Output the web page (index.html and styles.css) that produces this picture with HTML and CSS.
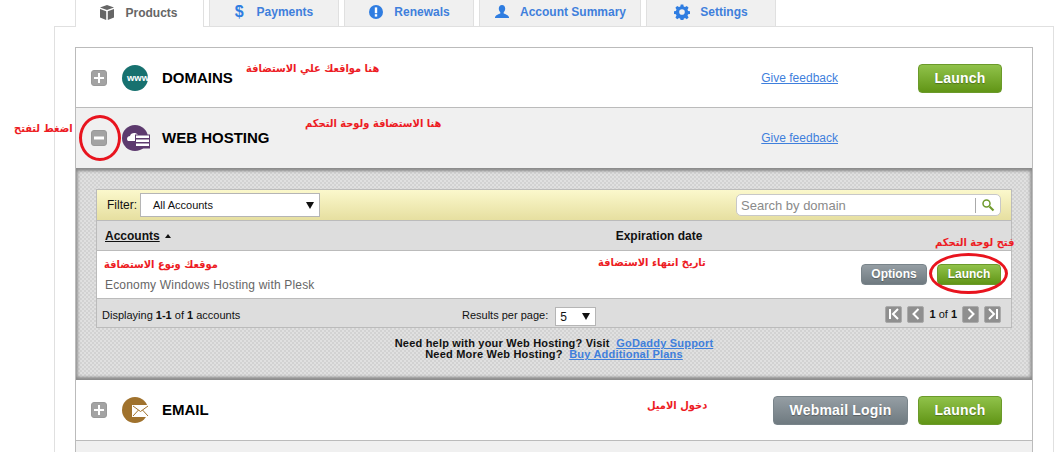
FILE: index.html
```html
<!DOCTYPE html>
<html lang="en">
<head>
    <meta charset="UTF-8">
    <title>My Products</title>
    <link rel="stylesheet" href="styles.css">
</head>
<body>
    <ul class="tabs">
        <li class="tab tab-active tab-products">
            <svg class="tab-icon" width="16" height="16" viewBox="0 0 16 16"><path fill="#666" d="M8 0l7 2.4L8 5 1 2.4zM1 4l6.2 2.3V15L1 12.6zM15 4L8.8 6.3V15l6.2-2.4z"/></svg>
            Products
        </li>
        <li class="tab tab-payments"><span class="dollar">$</span>Payments</li>
        <li class="tab tab-renewals">
            <svg class="tab-icon" width="16" height="16" viewBox="0 0 16 16"><circle cx="8" cy="8" r="7" fill="#2f7de1"/><rect x="6.8" y="3.4" width="2.4" height="5.8" fill="#fff"/><rect x="6.8" y="10.2" width="2.4" height="2.4" fill="#fff"/></svg>
            Renewals
        </li>
        <li class="tab tab-account">
            <svg class="tab-icon" width="16" height="16" viewBox="0 0 16 16"><path fill="#2f7de1" d="M8 1c2 0 3.2 1.500 3.200 3.600 0 1.600-.7 2.900-1.500 3.600v1.300c1.900.7 4 1.300 5.300 3.500v1H1v-1c1.300-2.200 3.400-2.800 5.300-3.500V8.200C5.500 7.500 4.800 6.200 4.800 4.600 4.800 2.500 6 1 8 1z"/></svg>
            Account Summary
        </li>
        <li class="tab tab-settings">
            <svg class="tab-icon" width="16" height="16" viewBox="0 0 16 16"><path fill="#2f7de1" fill-rule="evenodd" d="M6.700 1h2.600l.4 2 1.300.6 1.800-1.100 1.800 1.800-1.100 1.800.6 1.300 2 .4v2.600l-2 .4-.6 1.300 1.100 1.800-1.800 1.800-1.800-1.100-1.300.6-.4 2H6.700l-.4-2-1.300-.6-1.800 1.100-1.800-1.800 1.100-1.800-.6-1.300-2-.4V7.800l2-.4.6-1.300-1.100-1.800 1.800-1.800L5 3.600l1.300-.6zM8 5.700a2.800 2.800 0 1 0 0 5.600 2.800 2.800 0 0 0 0-5.600z" transform="translate(0 -.5)"/></svg>
            Settings
        </li>
    </ul>

    <div class="frame">
        <div class="panel">
            <div class="row row-domains">
                <span class="toggle">
                    <svg width="12" height="12" viewBox="0 0 12 12"><path fill="#fff" d="M5 1h2v4h4v2H7v4H5V7H1V5h4z"/></svg>
                </span>
                <svg class="row-icon" width="30" height="26" viewBox="0 0 30 26">
                    <circle cx="13" cy="13" r="13" fill="#17716f"/>
                    <text x="16" y="16" class="www">www</text>
                </svg>
                <h2 class="row-title">DOMAINS</h2>
                <a class="feedback" href="#">Give feedback</a>
                <a class="btn btn-green" href="#">Launch</a>
            </div>

            <div class="row row-open">
                <span class="toggle">
                    <svg width="12" height="12" viewBox="0 0 12 12"><rect x="1" y="4.500" width="10" height="3" fill="#fff"/></svg>
                </span>
                <svg class="row-icon" width="30" height="26" viewBox="0 0 30 26">
                    <circle cx="13" cy="13" r="13" fill="#5d3a6e"/>
                    <path fill="#fff" d="M6 16c-2-2-.5-5 2-5 .5-3 5.500-4.500 8-1v3h-3v3z"/>
                    <rect x="13" y="9.500" width="15" height="14" fill="#5d3a6e"/>
                    <path fill="#fff" d="M14 10.500h13v2.500H14zM14 14.500h13V17H14zM14 18.500h13V21H14z"/>
                </svg>
                <h2 class="row-title">WEB HOSTING</h2>
                <a class="feedback" href="#">Give feedback</a>
            </div>

            <div class="details">
                <div class="card">
                    <div class="toolbar">
                        <span class="filter-label">Filter:</span>
                        <div class="select select-filter">All Accounts<span class="arrow"></span></div>
                        <div class="search">
                            <span class="search-text">Search by domain</span>
                            <svg width="14" height="14" viewBox="0 0 14 14"><circle cx="5.500" cy="5.500" r="3.500" fill="#fff" stroke="#6f9a2c" stroke-width="1.500"/><path d="M8.500 8.500l4 4" stroke="#6f9a2c" stroke-width="2.200"/></svg>
                        </div>
                    </div>
                    <div class="table-head">
                        <a class="col-accounts" href="#">Accounts</a><span class="sort-up"></span>
                        <span class="col-expires">Expiration date</span>
                    </div>
                    <div class="table-row">
                        <span class="plan-name">Economy Windows Hosting with Plesk</span>
                        <a class="btn btn-gray btn-small btn-options" href="#">Options</a>
                        <a class="btn btn-green btn-small" href="#">Launch</a>
                    </div>
                    <div class="table-foot">
                        <span class="displaying">Displaying <b>1-1</b> of <b>1</b> accounts</span>
                        <span class="per-page">Results per page:</span>
                        <div class="select select-page">5<span class="arrow"></span></div>
                        <div class="pager">
                            <span class="page-btn"><svg width="12" height="12" viewBox="0 0 12 12"><path fill="none" stroke="#fff" stroke-width="2" d="M2 1v10M10 1L5 6l5 5"/></svg></span>
                            <span class="page-btn"><svg width="12" height="12" viewBox="0 0 12 12"><path fill="none" stroke="#fff" stroke-width="2" d="M8.500 1l-5 5 5 5"/></svg></span>
                            <span class="page-count"><b>1</b> of <b>1</b></span>
                            <span class="page-btn"><svg width="12" height="12" viewBox="0 0 12 12"><path fill="none" stroke="#fff" stroke-width="2" d="M3.500 1l5 5-5 5"/></svg></span>
                            <span class="page-btn"><svg width="12" height="12" viewBox="0 0 12 12"><path fill="none" stroke="#fff" stroke-width="2" d="M10 1v10M2 1l5 5-5 5"/></svg></span>
                        </div>
                    </div>
                </div>
                <p class="help">
                    Need help with your Web Hosting? Visit &nbsp;<a href="#">GoDaddy Support</a><br>
                    Need More Web Hosting? &nbsp;<a href="#">Buy Additional Plans</a>
                </p>
            </div>

            <div class="row row-email">
                <span class="toggle">
                    <svg width="12" height="12" viewBox="0 0 12 12"><path fill="#fff" d="M5 1h2v4h4v2H7v4H5V7H1V5h4z"/></svg>
                </span>
                <svg class="row-icon" width="30" height="26" viewBox="0 0 30 26">
                    <circle cx="13" cy="13" r="13" fill="#a0722d"/>
                    <rect x="10" y="8" width="17" height="12" fill="#fff"/>
                    <path fill="none" stroke="#a0722d" d="M11 9l7.500 5.500L26 9M11 19l5.500-6M26 19l-5.500-6"/>
                </svg>
                <h2 class="row-title">EMAIL</h2>
                <a class="btn btn-gray btn-webmail" href="#">Webmail Login</a>
                <a class="btn btn-green" href="#">Launch</a>
            </div>
            <div class="row-next"></div>
        </div>
    </div>

    <span class="note note-domains" dir="rtl">هنا مواقعك علي الاستضافة</span>
    <span class="note note-hosting" dir="rtl">هنا الاستضافة ولوحة التحكم</span>
    <span class="note note-press" dir="rtl">اضغط لتفتح</span>
    <span class="note note-site" dir="rtl">موقعك ونوع الاستضافة</span>
    <span class="note note-expiry" dir="rtl">تاريخ انتهاء الاستضافة</span>
    <span class="note note-open" dir="rtl">فتح لوحة التحكم</span>
    <span class="note note-mail" dir="rtl">دخول الاميل</span>
    <span class="oval oval-toggle"></span>
    <span class="oval oval-launch"></span>
</body>
</html>
```

FILE: styles.css
```css
html, body {
    height: 452px;
    overflow: hidden;
}

body {
    margin: 0;
    position: relative;
    background: #fff;
    font-family: "Liberation Sans", Arial, sans-serif;
    font-size: 12px;
    color: #111;
}

a {
    color: #3f7fdc;
}

/* tabs */
.tabs {
    display: flex;
    gap: 5px;
    height: 26px;
    margin: 0;
    padding: 0 0 0 75px;
    list-style: none;
}

.tab {
    display: flex;
    align-items: center;
    justify-content: center;
    box-sizing: border-box;
    height: 26px;
    background: #f0f0f0;
    border: 1px solid #e0e0e0;
    border-width: 0 1px;
    color: #3f7fdc;
    font-weight: bold;
    padding-bottom: 2px;
}

.tab-active {
    height: 27px;
    background: #fff;
    color: #666;
    position: relative;
    z-index: 1;
}

.tab-products { width: 129px; padding-right: 2px; }
.tab-payments { width: 130px; }
.tab-renewals { width: 130px; }
.tab-account { width: 162px; }
.tab-settings { width: 130px; }

.tab-icon {
    margin-right: 10px;
}

.dollar {
    font-size: 16px;
    margin-right: 13px;
    color: #2f7de1;
}

/* page frame */
.frame {
    box-sizing: border-box;
    width: 1000px;
    height: 426px;
    margin-left: 54px;
    padding: 20px 20px 0;
    border: 1px solid #e0e0e0;
    border-bottom: none;
}

.panel {
    border: 1px solid #bbb;
    border-bottom: none;
}

.row {
    display: flex;
    align-items: center;
    box-sizing: border-box;
    height: 60px;
    padding: 0 30px 0 15px;
    border-bottom: 1px solid #bbb;
}

.row-domains {
    padding-top: 1px;
}

.row-email {
    height: 61px;
}

.row-open {
    background: #f0f0f0;
    border-bottom: none;
}

.row-next {
    height: 20px;
    background: #f0f0f0;
}

.toggle {
    display: flex;
    align-items: center;
    justify-content: center;
    width: 16px;
    height: 16px;
    background: #a3a3a3;
    border: 1px solid #999;
    box-sizing: border-box;
    border-radius: 3px;
}

.row-icon {
    margin-left: 15px;
}

.www {
    fill: #fff;
    font-size: 9.500px;
    font-weight: bold;
    text-anchor: middle;
}

.row-title {
    flex: 1;
    margin: 0 0 0 10px;
    font-size: 15px;
    line-height: 18px;
    color: #000;
}

.feedback {
    margin-right: 80px;
}

.row-open .feedback {
    margin-right: 164px;
}

/* buttons */
.btn {
    display: block;
    box-sizing: border-box;
    width: 84px;
    height: 29px;
    border-radius: 4px;
    color: #fff;
    font-size: 14px;
    font-weight: bold;
    letter-spacing: 0.2px;
    line-height: 27px;
    text-align: center;
    text-decoration: none;
    text-shadow: 0 1px 1px rgba(0,0,0,0.3);
}

.btn-green {
    background: linear-gradient(#90c24a, #619516);
    border: 1px solid #6b9a2a;
}

.btn-gray {
    background: linear-gradient(#959ea4, #6f7a80);
    border: 1px solid #79848a;
}

.btn-webmail {
    width: 135px;
    margin-right: 10px;
}

.btn-small {
    width: 64px;
    height: 21px;
    font-size: 12px;
    letter-spacing: 0;
    line-height: 18px;
}

.btn-options {
    width: 66px;
    margin-right: 10px;
    margin-left: auto;
}

/* expanded details */
.details {
    box-sizing: border-box;
    height: 212px;
    padding: 21px 20px 0;
    background-color: #e0e0e0;
    background-image: conic-gradient(#d2d2d2 25%, transparent 0 50%, #d2d2d2 0 75%, transparent 0);
    background-size: 4px 4px;
    box-shadow: inset 0 4px 3px -1px #8a8a8a, inset 0 -4px 3px -1px #8a8a8a, inset 4px 0 3px -2px #a0a0a0, inset -4px 0 3px -2px #a0a0a0;
}

.card {
    border: 1px solid #bbb;
    background: #ddd;
}

.toolbar {
    display: flex;
    align-items: center;
    box-sizing: border-box;
    height: 31px;
    padding: 0 10px;
    background: linear-gradient(#fbf8cc, #e6dfa0);
    border-bottom: 1px solid #bbb;
}

.filter-label {
    margin-right: 3px;
}

.select {
    position: relative;
    box-sizing: border-box;
    background: #fff;
    border: 1px solid #b5b5b5;
    font-size: 11px;
}

.select-filter {
    width: 180px;
    height: 24px;
    padding-left: 12px;
    line-height: 22px;
}

.select-page {
    width: 41px;
    height: 19px;
    margin-top: 4px;
    margin-left: 7px;
    padding-left: 4px;
    font-size: 12px;
    line-height: 18px;
}

.arrow {
    position: absolute;
    right: 5px;
    top: 50%;
    margin-top: -3px;
    border: 4px solid transparent;
    border-top: 7px solid #111;
    border-bottom: none;
}

.search {
    display: flex;
    align-items: center;
    box-sizing: border-box;
    width: 265px;
    height: 22px;
    margin-left: auto;
    padding: 0 5px 0 4px;
    background: #fff;
    border: 1px solid #c8c8c8;
    border-radius: 5px;
}

.search-text {
    flex: 1;
    margin-right: 5px;
    border-right: 1px solid #aaa;
    color: #8a8a8a;
    font-size: 13px;
    line-height: 15px;
}

.table-head {
    display: flex;
    align-items: center;
    box-sizing: border-box;
    height: 30px;
    padding-left: 8px;
    border-bottom: 1px solid #bbb;
    font-weight: bold;
}

.col-accounts {
    color: #111;
}

.sort-up {
    margin-left: 5px;
    border: 3px solid transparent;
    border-top: none;
    border-bottom: 4px solid #111;
}

.col-expires {
    margin-left: 445px;
}

.table-row {
    display: flex;
    align-items: center;
    box-sizing: border-box;
    height: 48px;
    padding-right: 10px;
    padding-left: 8px;
    background: #fff;
    border-bottom: 1px solid #bbb;
}

.plan-name {
    align-self: flex-end;
    padding-bottom: 6px;
    color: #666;
    letter-spacing: 0.18px;
}

.table-foot {
    display: flex;
    align-items: center;
    box-sizing: border-box;
    height: 28px;
    padding: 2px 10px 0 5px;
    font-size: 11px;
}

.displaying {
    width: 360px;
    margin-top: 1px;
}

.per-page {
    margin-top: 1px;
}

.pager {
    display: flex;
    align-items: center;
    gap: 5px;
    margin-left: auto;
}

.page-btn {
    display: flex;
    align-items: center;
    justify-content: center;
    width: 17px;
    height: 17px;
    background: #8f8f8f;
    border: 1px solid #aaa;
    box-sizing: border-box;
    border-radius: 2px;
}

.page-count {
    color: #111;
}

.help {
    margin: 10px 0 0;
    font-size: 11px;
    font-weight: bold;
    letter-spacing: 0.2px;
    line-height: 11px;
    text-align: center;
}

/* red notes drawn over the screenshot */
.note {
    position: absolute;
    color: #ed1c24;
    font-family: "DejaVu Sans Condensed", "DejaVu Sans", sans-serif;
    font-size: 11px;
    font-weight: bold;
    line-height: 16px;
    white-space: nowrap;
}

.note-domains { left: 246px; top: 61px; }
.note-hosting { left: 305px; top: 116px; }
.note-press { left: 14px; top: 121px; }
.note-site { left: 104px; top: 257px; }
.note-expiry { left: 598px; top: 255px; }
.note-open { left: 935px; top: 235px; }
.note-mail { left: 647px; top: 398px; }

.oval {
    position: absolute;
    box-sizing: border-box;
    border: 3px solid #e8141e;
    border-radius: 50%;
}

.oval-toggle {
    left: 79px;
    top: 115px;
    width: 42px;
    height: 46px;
}

.oval-launch {
    left: 929px;
    top: 253px;
    width: 79px;
    height: 41px;
}
```
